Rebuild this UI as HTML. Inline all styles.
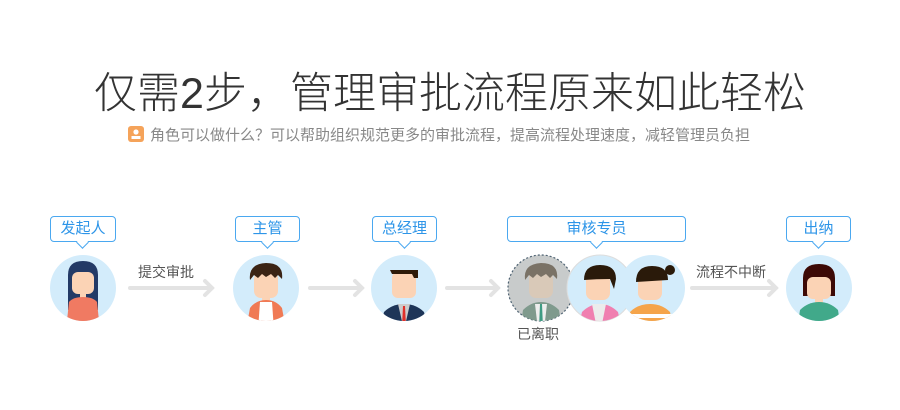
<!DOCTYPE html>
<html><head><meta charset="utf-8"><style>
body{margin:0;width:900px;height:410px;background:#fff;font-family:"Liberation Sans","Noto Sans CJK SC",sans-serif;position:relative;overflow:hidden}
.t{position:absolute;left:0;width:900px;text-align:center;top:59px;font-size:43px;color:#333;font-weight:300;letter-spacing:0px}
.s{position:absolute;left:128px;top:124px;font-size:15px;color:#888;white-space:nowrap}
.s i{display:inline-block;width:16px;height:16px;background:#f5a35a;border-radius:3px;vertical-align:-2px;margin-right:6px;position:relative}
.lb{position:absolute;top:216px;height:26px;border:1.5px solid #4aa8f0;border-radius:4px;box-sizing:border-box;color:#2d95e8;font-size:15px;text-align:center;line-height:23px;background:#fff}
.lb:after{content:"";position:absolute;left:50%;bottom:-6px;width:8px;height:8px;margin-left:-5px;background:#fff;border-right:1.5px solid #4aa8f0;border-bottom:1.5px solid #4aa8f0;transform:rotate(45deg)}
.tx{position:absolute;font-size:14px;color:#555;white-space:nowrap}
svg{position:absolute;left:0;top:0}
</style></head><body>
<div class="t">仅需2步，管理审批流程原来如此轻松</div>
<div class="s"><i><svg width="16" height="16"><circle cx="8" cy="6" r="2.6" fill="#fff"/><rect x="3.5" y="10" width="9" height="3" fill="#fff"/></svg></i>角色可以做什么？可以帮助组织规范更多的审批流程，提高流程处理速度，减轻管理员负担</div>
<svg width="900" height="410">
<defs><clipPath id="c1"><circle cx="83" cy="288" r="33"/></clipPath><clipPath id="c2"><circle cx="266" cy="288" r="33"/></clipPath><clipPath id="c3"><circle cx="404" cy="288" r="33"/></clipPath><clipPath id="c4"><circle cx="541" cy="288" r="33"/></clipPath><clipPath id="c5"><circle cx="600" cy="288" r="33"/></clipPath><clipPath id="c6"><circle cx="652" cy="288" r="33"/></clipPath><clipPath id="c7"><circle cx="819" cy="288" r="33"/></clipPath></defs>
<g stroke="#e3e3e3" stroke-width="4" fill="none" stroke-linecap="round">
<path d="M130 288H212M205 281l7 7-7 7"/><path d="M310 288H362M355 281l7 7-7 7"/><path d="M447 288H498M491 281l7 7-7 7"/><path d="M692 288H776M769 281l7 7-7 7"/></g>
<circle cx="83" cy="288" r="33" fill="#d3ecfb"/><g clip-path="url(#c1)">
<path d="M68 310V275q0-14 15-14t15 14v35z" fill="#233a66"/><rect x="72" y="272" width="22" height="22" rx="6" fill="#fbd3b5"/><rect x="80" y="290" width="6" height="8" fill="#fbd3b5"/>
<path d="M66 330l3-28q4-5 14-5t14 5l3 28z" fill="#f07a62"/></g>
<circle cx="266" cy="288" r="33" fill="#d3ecfb"/><g clip-path="url(#c2)">
<rect x="254" y="272" width="24" height="26" rx="7" fill="#fbd3b5"/><rect x="262" y="294" width="8" height="8" fill="#fbd3b5"/>
<path d="M250 280q-2-16 16-17q18 0 16 16l-4-4-3 3-4-4-5 3-4-3-4 4-4-3z" fill="#3b2415"/>
<path d="M246 330l4-22q6-8 16-8t16 8l4 22z" fill="#f07a55"/><path d="M258 330l2-28h12l2 28z" fill="#fff"/></g>
<circle cx="404" cy="288" r="33" fill="#d3ecfb"/><g clip-path="url(#c3)">
<rect x="392" y="272" width="24" height="26" rx="6" fill="#fbd3b5"/><path d="M390 270h28v8h-4l-2-4h-20z" fill="#2e1a08"/>
<path d="M380 330l4-18q8-8 20-8t20 8l4 18z" fill="#1e3558"/><path d="M398 304h12l-6 26z" fill="#ccc"/><path d="M403 306h2l1 20h-4z" fill="#e0302a"/></g>
<circle cx="541" cy="288" r="33" fill="#c8cbcb" stroke="#4e6272" stroke-width="1.2" stroke-dasharray="2 2"/><g clip-path="url(#c4)">
<rect x="529" y="272" width="24" height="26" rx="7" fill="#d9c9b8"/><path d="M525 280q-2-16 16-17q18 0 16 16l-4-4-3 3-4-4-5 3-4-3-4 4-4-3z" fill="#7a7266"/>
<path d="M520 330l3-20q8-8 18-8t18 8l3 20z" fill="#7f9a8d"/><path d="M535 304h12l-3 26h-6z" fill="#eee"/><path d="M540 304h2l1 24h-4z" fill="#3f9c84"/></g>
<circle cx="600" cy="288" r="33" fill="#d3ecfb" stroke="#ddd" stroke-width="1"/><g clip-path="url(#c5)">
<rect x="586" y="274" width="24" height="26" rx="7" fill="#fbd3b5"/><path d="M584 280q0-15 16-15t16 14l-2 10-4-10q-14 0-26 1z" fill="#2a1a0a"/>
<path d="M578 330l4-18q8-8 18-8t18 8l4 18z" fill="#f07fb0"/><path d="M592 304h14l-4 20h-6z" fill="#ececec"/></g>
<circle cx="652" cy="288" r="33" fill="#d3ecfb"/><g clip-path="url(#c6)">
<rect x="638" y="274" width="24" height="26" rx="7" fill="#fbd3b5"/><path d="M636 282q0-16 16-16t16 14z" fill="#2a1a0a"/><circle cx="670" cy="270" r="5" fill="#2a1a0a"/>
<path d="M626 330l4-18q8-8 20-8t20 8l4 18z" fill="#f5a44a"/><rect x="620" y="314" width="60" height="4" fill="#fff"/></g>
<circle cx="819" cy="288" r="33" fill="#d3ecfb"/><g clip-path="url(#c7)">
<path d="M803 296v-18q0-14 16-14t16 14v18z" fill="#3d0a06"/><rect x="807" y="277" width="24" height="22" rx="6" fill="#fbd3b5"/><rect x="815" y="296" width="8" height="8" fill="#fbd3b5"/>
<path d="M797 330l3-20q8-8 19-8t19 8l3 20z" fill="#41a98a"/></g>
</svg>
<div class="lb" style="left:50px;width:66px">发起人</div>
<div class="lb" style="left:235px;width:65px">主管</div>
<div class="lb" style="left:372px;width:65px">总经理</div>
<div class="lb" style="left:507px;width:179px">审核专员</div>
<div class="lb" style="left:786px;width:65px">出纳</div>
<div class="tx" style="left:138px;top:262px">提交审批</div>
<div class="tx" style="left:696px;top:262px">流程不中断</div>
<div class="tx" style="left:517px;top:324px">已离职</div>
</body></html>
